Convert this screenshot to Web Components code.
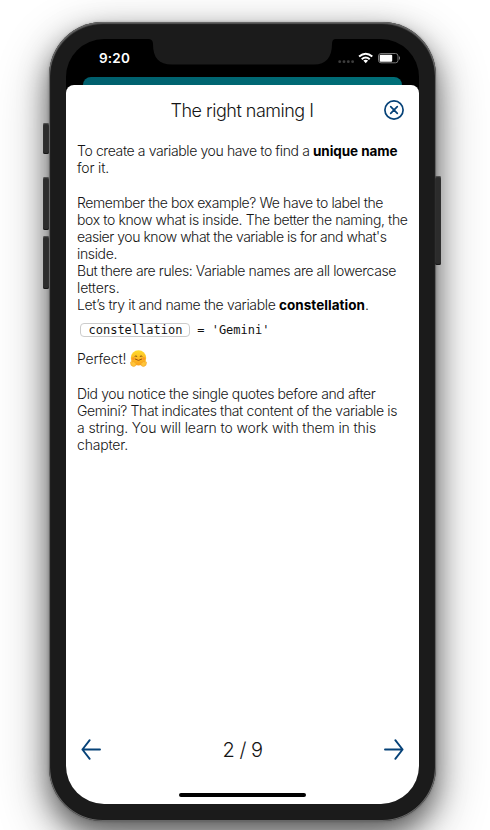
<!DOCTYPE html>
<html lang="en"><head><meta charset="utf-8"><title>The right naming I</title>
<style>html,body{margin:0;width:490px;height:830px;overflow:hidden;background:#fff}body{font-family:Inter,"Liberation Sans",sans-serif}</style>
</head><body>
<phone-frame>
  <status-bar slot="status"></status-bar>
  <lesson-sheet>
    <fit-text slot="title" w="143">The right naming I</fit-text>
    <text-line><fit-text w="236">To create a variable you have to find a </fit-text><fit-text w="84.5" bold>unique name</fit-text></text-line>
    <text-line><fit-text w="32">for it.</fit-text></text-line>
    <text-line gap></text-line>
    <text-line><fit-text w="306">Remember the box example? We have to label the</fit-text></text-line>
    <text-line><fit-text w="330.5">box to know what is inside. The better the naming, the</fit-text></text-line>
    <text-line><fit-text w="309.5">easier you know what the variable is for and what's</fit-text></text-line>
    <text-line><fit-text w="40">inside.</fit-text></text-line>
    <text-line><fit-text w="319">But there are rules: Variable names are all lowercase</fit-text></text-line>
    <text-line><fit-text w="42.5">letters.</fit-text></text-line>
    <text-line><fit-text w="202">Let’s try it and name the variable </fit-text><fit-text w="86" bold>constellation</fit-text><fit-text w="4">.</fit-text></text-line>
    <code-line name="constellation"> = 'Gemini'</code-line>
    <text-line><fit-text w="53">Perfect! </fit-text><hug-face></hug-face></text-line>
    <text-line gap></text-line>
    <text-line><fit-text w="298.5">Did you notice the single quotes before and after</fit-text></text-line>
    <text-line><fit-text w="320">Gemini? That indicates that content of the variable is</fit-text></text-line>
    <text-line><fit-text w="299">a string. You will learn to work with them in this</fit-text></text-line>
    <text-line><fit-text w="51">chapter.</fit-text></text-line>
    <page-nav slot="nav"><fit-text w="40">2 / 9</fit-text></page-nav>
  </lesson-sheet>
</phone-frame>
<script>
const define=(name,html,init)=>customElements.define(name,class extends HTMLElement{
  connectedCallback(){
    if(this.shadowRoot)return;
    this.attachShadow({mode:'open'}).innerHTML=html;
    if(init)init(this);
  }
});
define('phone-frame',`<style>
:host{display:block;position:relative;box-sizing:border-box;width:490px;height:830px;padding:22px 54px 0 49px}
.body{position:relative;box-sizing:border-box;width:387px;height:799px;padding:17px 17px 16px;border-radius:54px;background:#1b1b1b;box-shadow:inset 0 0 0 1px #666,inset 0 1px 1px 1px #555,0 0 3px rgba(0,0,0,.25),0 13px 28px rgba(0,0,0,.5),0 18px 54px rgba(0,0,0,.32)}
.screen{position:relative;width:353px;height:765px;border-radius:38px;background:#000;overflow:hidden;display:flex;flex-direction:column}
.notch{position:absolute;left:83px;top:0}
.back{flex:none;height:8px;margin:0 17px;border-radius:8px 8px 0 0;background:linear-gradient(90deg,#005f6d,#006f78)}
.key{position:absolute;background:#2c2c2c;box-shadow:inset 0 1px 1px #555,inset 0 -1px 0 #151515;border-radius:2px;width:6px;z-index:1}
</style>
<i class="key" style="left:43px;top:123px;height:31px"></i><i class="key" style="left:43px;top:177px;height:53px"></i><i class="key" style="left:43px;top:236px;height:53px"></i><i class="key" style="left:435px;top:176px;height:89px"></i>
<div class="body"><div class="screen">
<svg class="notch" width="186" height="26"><path d="M0 0Q4 .5 4 5C4 19 10 25.5 23 25.5H165C177 25.5 183 18 183 5Q183 .5 186 0Z" fill="#1b1b1b"/></svg>
<slot name="status"></slot><div class="back"></div><slot></slot></div></div>`);
define('status-bar',`<style>
:host{flex:none;position:relative;display:flex;justify-content:space-between;box-sizing:border-box;height:38px;padding:11px 16px 0 33px;color:#fff;font-size:14px;font-weight:600;line-height:17px}
</style><fit-text w="31" bold="600">9:20</fit-text>
<svg width="66" height="18" viewBox="0 0 66 18"><g fill="#3d3d3d"><circle cx="2.7" cy="11.7" r="1.4"/><circle cx="7" cy="11.7" r="1.4"/><circle cx="11.3" cy="11.7" r="1.4"/><circle cx="15.6" cy="11.7" r="1.4"/></g>
<g fill="none" stroke="#fff" stroke-width="2"><path d="M22.1 6.6Q28.7.8 35.3 6.6"/><path d="M24.7 9.2Q28.7 5.7 32.7 9.2"/></g><path d="M26.3 10.6Q28.7 8.9 31.1 10.6L28.7 13.2Z" fill="#fff"/>
<rect x="41.5" y="3.5" width="19.5" height="9.3" rx="2.5" fill="none" stroke="#777"/><rect x="42.7" y="4.7" width="12.5" height="7" rx="1" fill="#fff"/><path d="M62 6q2 1.9 0 4.2Z" fill="#888"/></svg>`);
define('lesson-sheet',`<style>
:host{flex:1;display:flex;flex-direction:column;background:#fff;border-radius:8px 8px 0 0;color:#151515;font-weight:300;position:relative}
header{height:51px;box-sizing:border-box;display:grid;grid-template-columns:60px 1fr 60px;align-items:center;justify-items:center;font-size:18px;line-height:24px}
header div{margin-right:1px}
header svg{grid-column:3;margin:0 0 1px 10px}
main{flex:1;padding:6px 11px 0;font-size:14px;line-height:17px}
.home{width:127px;height:4.5px;border-radius:3px;background:#000;margin:0 auto 6.7px}
</style><header><span></span><div><slot name="title"></slot></div>
<svg width="22" height="22" viewBox="0 0 22 22" fill="none" stroke="#064278" stroke-width="1.7" stroke-linecap="round"><circle cx="11" cy="11" r="9.1"/><path d="M7.7 7.7l6.6 6.6M14.3 7.7l-6.6 6.6"/></svg></header>
<main><slot></slot></main><slot name="nav"></slot><div class="home"></div>`);
define('text-line',`<style>:host{display:flex;align-items:baseline;height:17px;white-space:pre}:host([gap]){height:18px}</style><slot></slot>`);
define('code-line',`<style>:host{display:flex;align-items:center;height:37px;box-sizing:border-box;padding:0 0 3px 3px;font:12px/14px "DejaVu Sans Mono",monospace;color:#111;white-space:pre}
span{box-sizing:border-box;width:110px;height:14px;border:1px solid #ccc;border-radius:4px;padding-left:7.5px;line-height:12px}</style><span></span><slot></slot>`,
 el=>{el.shadowRoot.querySelector('span').textContent=el.getAttribute('name')});
define('hug-face',`<style>:host{display:block;align-self:flex-start;width:17px;height:17px;white-space:normal}svg{display:block;overflow:visible}</style>
<svg width="17" height="17" viewBox="0 0 17 17"><defs><linearGradient id="f" x2="0" y2="1"><stop stop-color="#ffdc2e"/><stop offset="1" stop-color="#fba01a"/></linearGradient></defs><circle cx="8.5" cy="7.9" r="7.7" fill="url(#f)"/>
<path d="M5.3 9.2Q8.5 11.8 11.7 9.2" fill="none" stroke="#9b510e" stroke-width="1" stroke-linecap="round"/><path d="M5 6.5Q5.9 4.5 6.8 6.5M10.2 6.5Q11.1 4.5 12 6.5" fill="none" stroke="#71400e" stroke-width=".9" stroke-linecap="round"/><circle cx="3.3" cy="8.5" r="1.5" fill="#f9792d" opacity=".5"/><circle cx="13.7" cy="8.5" r="1.5" fill="#f9792d" opacity=".5"/>
<g fill="#ffc53a" stroke="#ee9a20" stroke-width=".5"><path d="M.5 12.2Q1.3 10.6 2.4 12L3.5 11.4Q4.2 11.3 4.4 12.3L6.2 13.5Q6.3 16.3 3.7 16.6Q.2 16.2.5 12.2Z"/><path d="M16.5 12.2Q15.7 10.6 14.6 12L13.5 11.4Q12.8 11.3 12.6 12.3L10.8 13.5Q10.7 16.3 13.3 16.6Q16.8 16.2 16.5 12.2Z"/></g></svg>`);
define('page-nav',`<style>:host{display:flex;justify-content:space-between;align-items:center;height:24px;padding:0 15px;margin-bottom:32px;font-size:20px;line-height:24px}
slot{display:block;padding-top:2px}
svg{fill:none;stroke:#064278;stroke-width:1.9;stroke-linecap:round;stroke-linejoin:round}</style>
<svg width="20" height="24"><path d="M19 12.5H1.4M8.7 3.2L1.4 12.5L8.7 21.8"/></svg><slot></slot><svg width="20" height="24"><path d="M1 12.5H18.6M11.3 3.2L18.6 12.5L11.3 21.8"/></svg>`);
/* Text run that spreads its letter spacing to fill the width in "w". */
define('fit-text',`<style>:host{display:block;white-space:pre;flex:none}:host([bold]){font-weight:700;font-size:13.5px;color:#000}:host([bold="600"]){font-weight:600;color:#fff}span{display:inline-block}</style><span><slot></slot></span>`,el=>{
  const s=el.shadowRoot.querySelector('span'),w=+el.getAttribute('w');
  requestAnimationFrame(()=>{const n=el.textContent.length,real=s.getBoundingClientRect().width;s.style.letterSpacing=(w-real)/n+'px';el.style.width=w+'px'});
});
</script></body></html>
